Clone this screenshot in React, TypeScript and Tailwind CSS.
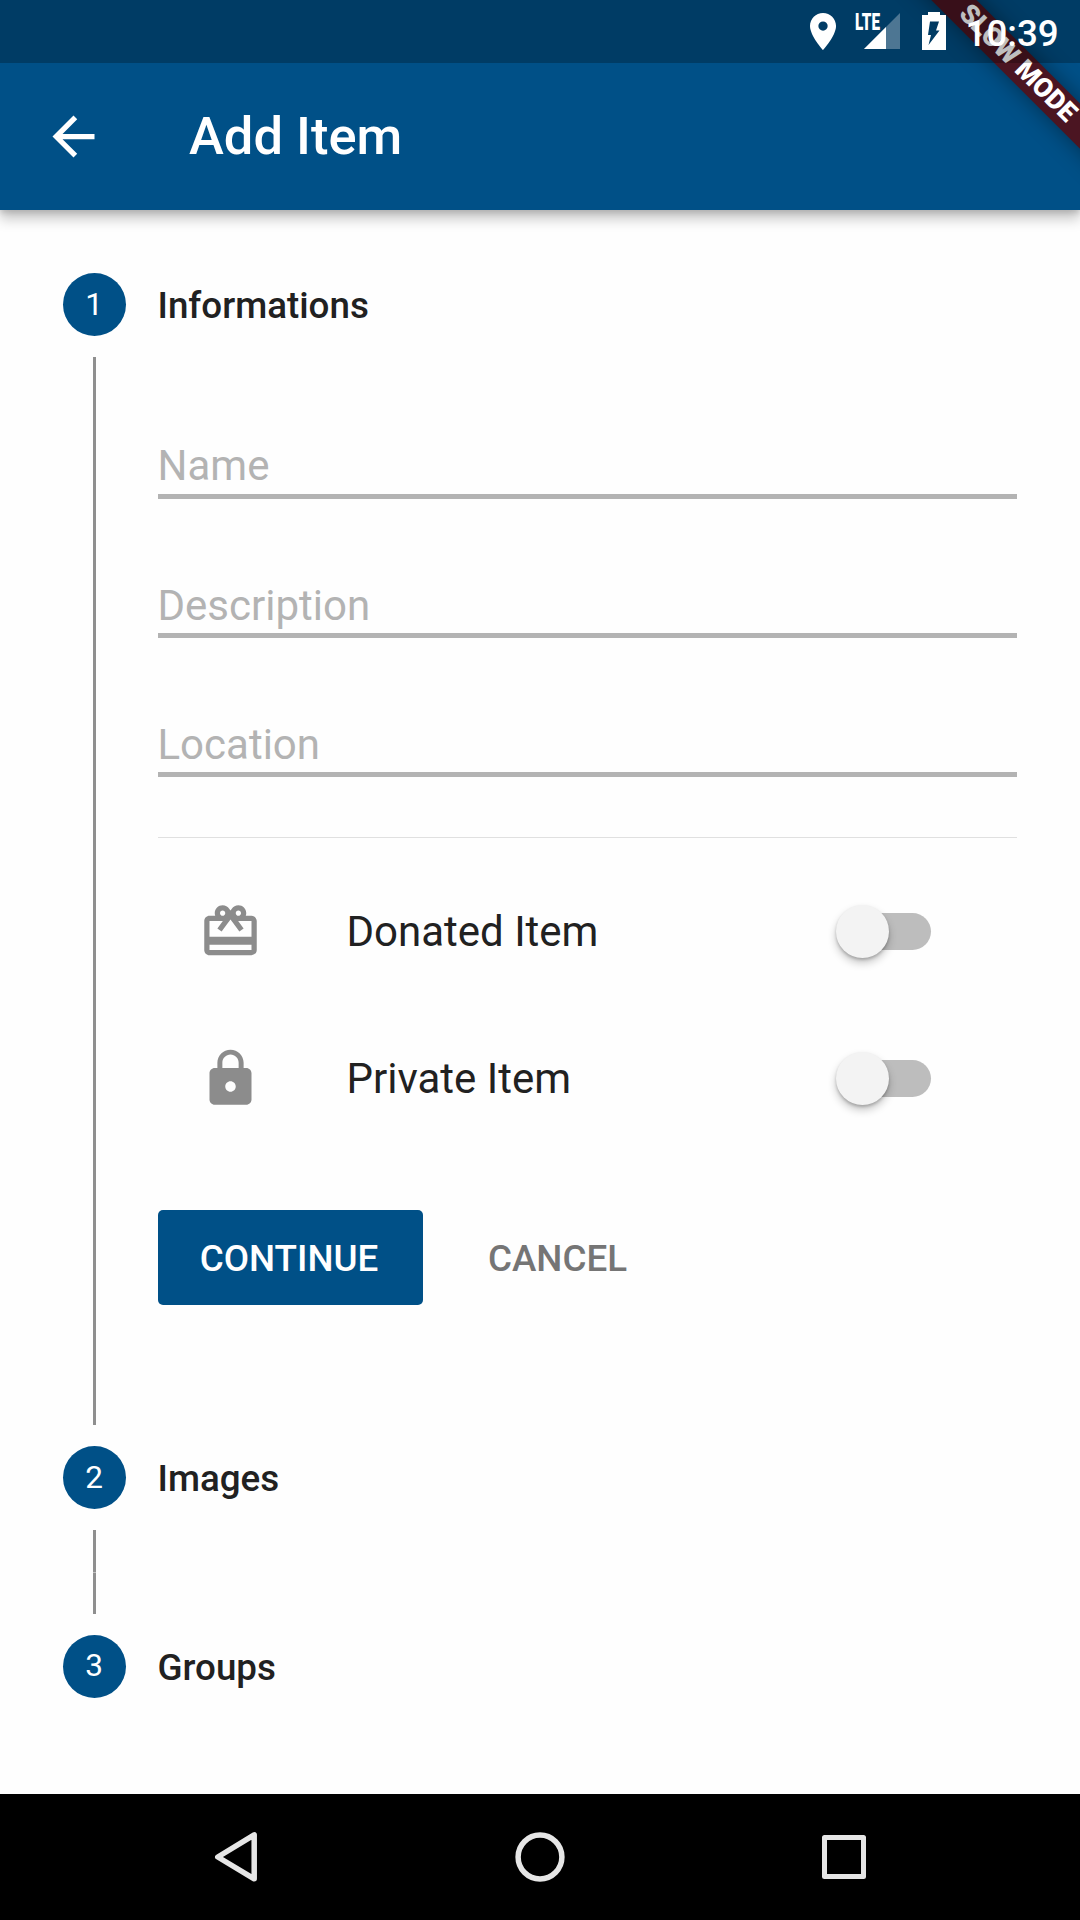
import { ReactNode } from "react";

const fields = ["Name", "Description", "Location"];

function StepHeader({ number, title }: { number: number; title: string }) {
  return (
    <div className="flex h-[63px] items-center">
      <div className="flex size-[63px] items-center justify-center rounded-full bg-[#005087] pr-px text-[31.5px] leading-none text-white">
        {number}
      </div>
      <h2 className="ml-[31.5px] pt-[4px] text-[36.75px] leading-none font-medium text-[#212121]">{title}</h2>
    </div>
  );
}

function SwitchRow({ icon, label }: { icon: ReactNode; label: string }) {
  return (
    <div className="flex h-[147px] items-center pr-[82px] pl-[41.5px]">
      <svg viewBox="0 0 24 24" className="size-[63px] fill-[#8c8c8c]">
        {icon}
      </svg>
      <span className="ml-[84.5px] flex-1 text-[42px] leading-none text-[#212121]">{label}</span>
      <button role="switch" aria-checked="false" aria-label={label} className="flex h-[53px] w-[99px] items-center">
        <span className="z-10 size-[52.5px] shrink-0 rounded-full bg-[#f3f3f3] shadow-[0_5px_8px_rgba(0,0,0,0.22),0_2px_3px_rgba(0,0,0,0.2)]" />
        <span className="-ml-[34px] h-[37px] w-[76px] rounded-r-full bg-[#bdbdbd]" />
      </button>
    </div>
  );
}

export default function App() {
  return (
    <div className="relative flex h-[1920px] w-[1080px] flex-col overflow-hidden bg-[#fefefe] font-['Roboto',sans-serif]">
      <header className="relative z-10 h-[210px] overflow-visible bg-[#005087] pt-[63px] shadow-[0_9px_12px_rgba(0,0,0,0.22),0_3px_5px_rgba(0,0,0,0.12)]">
        <div className="flex h-[147px] items-center pl-[42px]">
          <svg viewBox="0 0 24 24" className="size-[63px] fill-white">
            <path d="M20 11H7.83l5.59-5.59L12 4l-8 8 8 8 1.41-1.41L7.83 13H20v-2z" />
          </svg>
          <h1 className="ml-[84px] text-[52.5px] leading-none font-medium text-white">Add Item</h1>
        </div>
        <div className="absolute inset-0 overflow-hidden">
          <div className="absolute top-[47.25px] left-[807px] flex h-[31.5px] w-[420px] rotate-45 items-center justify-center bg-[#4b1522] pl-[2px] text-[26.8px] leading-none font-black text-white shadow-[0_0_22px_rgba(0,0,0,0.4)]">
            SLOW MODE
          </div>
        </div>
        <div className="absolute inset-x-0 top-0 flex h-[63px] bg-black/25">
          <svg viewBox="0 0 1080 63" className="h-[63px] w-[1080px]">
            <path
              transform="translate(800.7 9.3) scale(1.86)"
              fill="#fff"
              d="M12 2C8.13 2 5 5.13 5 9c0 5.25 7 13 7 13s7-7.75 7-13c0-3.87-3.13-7-7-7zm0 9.5a2.5 2.5 0 1 1 0-5 2.5 2.5 0 0 1 0 5z"
            />
            <path fill="#fff" fillOpacity=".3" d="M900 13v36h-36z" />
            <path fill="#fff" d="M886 27v22h-22z" />
            <path
              fill="#fff"
              fillRule="evenodd"
              d="M928 12h12v3h6v35h-24V15h6zM930 21.5h9l-3 9h3.5l-11 14.5 2.5-10h-3z"
            />
          </svg>
          <span className="absolute top-[11px] left-[854.5px] origin-left scale-x-[0.65] text-[23.5px] leading-[22px] font-black text-white">
            LTE
          </span>
          <span className="absolute top-[14.5px] left-[965.5px] text-[36.75px] leading-[38px] font-medium text-white">10:39</span>
        </div>
      </header>

      <main className="flex flex-1 flex-col px-[63px] pt-[63px]">
        <StepHeader number={1} title="Informations" />
        <div className="mt-[21px] flex h-[1068px]">
          <div className="ml-[30px] w-[3px] bg-[#8f8f8f]" />
          <div className="ml-[61.5px] flex-1">
            {fields.map((f) => (
              <div key={f} className="flex h-[139px] flex-col justify-end border-b-[5px] border-[#b3b3b3] pb-[3px] text-[42px] leading-[49px] text-[#b3b3b3] first:h-[142px] first:pb-[4px]">
                {f}
              </div>
            ))}
            <div className="mt-[60px] mb-[20px] h-px bg-[#e0e0e0]" />
            <SwitchRow
              label="Donated Item"
              icon={
                <path d="M20 6h-2.18c.11-.31.18-.65.18-1 0-1.66-1.34-3-3-3-1.05 0-1.96.54-2.5 1.35l-.5.67-.5-.68C10.96 2.54 10.05 2 9 2 7.34 2 6 3.34 6 5c0 .35.07.69.18 1H4c-1.11 0-1.99.89-1.99 2L2 19c0 1.11.89 2 2 2h16c1.11 0 2-.89 2-2V8c0-1.11-.89-2-2-2zm-5-2c.55 0 1 .45 1 1s-.45 1-1 1-1-.45-1-1 .45-1 1-1zM9 4c.55 0 1 .45 1 1s-.45 1-1 1-1-.45-1-1 .45-1 1-1zm11 15H4v-2h16v2zm0-5H4V8h5.08L7 10.83 8.62 12 11 8.76l1-1.36 1 1.36L15.38 12 17 10.83 14.92 8H20v6z" />
              }
            />
            <SwitchRow
              label="Private Item"
              icon={
                <path d="M18 8h-1V6c0-2.76-2.24-5-5-5S7 3.24 7 6v2H6c-1.1 0-2 .9-2 2v10c0 1.1.9 2 2 2h12c1.1 0 2-.9 2-2V10c0-1.1-.9-2-2-2zm-6 9c-1.1 0-2-.9-2-2s.9-2 2-2 2 .9 2 2-.9 2-2 2zm3.1-9H8.9V6c0-1.71 1.39-3.1 3.1-3.1 1.71 0 3.1 1.39 3.1 3.1v2z" />
              }
            />
            <div className="mt-[58px] flex h-[94.5px] text-[36.75px] leading-none font-medium">
              <button className="w-[265px] rounded-[5px] bg-[#005087] pt-[5px] pr-[2px] text-white">CONTINUE</button>
              <button className="ml-[19.5px] w-[231px] pt-[5px] text-[#757575]">CANCEL</button>
            </div>
          </div>
        </div>
        <div className="mt-[21px]">
          <StepHeader number={2} title="Images" />
        </div>
        <div className="mt-[21px] mb-[20.5px] ml-[30px] flex w-[3px] flex-col">
          <div className="h-[42px] bg-[#8f8f8f]" />
          <div className="h-px bg-[#c0c0c0]" />
          <div className="h-[41px] bg-[#8f8f8f]" />
        </div>
        <StepHeader number={3} title="Groups" />
      </main>

      <nav className="flex h-[126px] items-center bg-black">
        <svg viewBox="0 0 1080 126" className="h-[126px] w-[1080px]" fill="none" stroke="#e6e6e6" strokeWidth="5.5" strokeLinejoin="round">
          <path d="M254.2 40.8v44L217.8 63z" />
          <circle cx="540" cy="63" r="21.9" />
          <rect x="824.5" y="43.5" width="39" height="39" strokeWidth="5" />
        </svg>
      </nav>
    </div>
  );
}
